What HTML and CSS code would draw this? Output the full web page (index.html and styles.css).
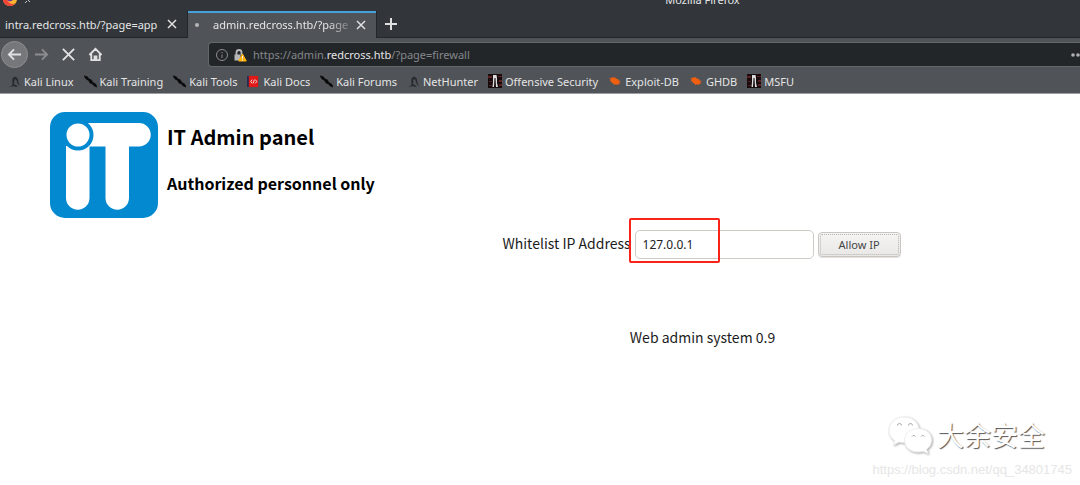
FILE: index.html
```
<!DOCTYPE html>
<html lang="en">
<head>
<meta charset="utf-8">
<title>IT Admin panel</title>
<link rel="stylesheet" href="styles.css">
</head>
<body>
<svg class="defs" aria-hidden="true">
  <symbol id="dragon" viewBox="0 0 14 14"><path d="M1 12.500c2-.2 3.200-.9 3.800-2.300L4.600 5.500C5 3 6.200 1.800 8 2c1.900.3 2.700 1.800 2.900 3.700.2 2.300.8 4 2.300 6-2-.7-3.300-2.300-3.700-4.400C9.200 5.500 9 4.600 8 4.600c-.9 0-1 1-1.200 2.300L6.500 10c1.200.6 2.600.8 4 2-1.500.9-3.300.5-4.600-.1-1.500.8-3.200 1.100-4.900.6z" fill="#292c2f"/></symbol>
  <symbol id="blade" viewBox="0 0 14 14"><path d="M0 1l3.500.8 1.800 2.500 2.500.8 1.700 3 3 1.600L14 13l-3-1.200-2-2.300-2.500-.8-1.700-3L2.500 4.500z" fill="#08090a" stroke="#08090a" stroke-width=".7"/></symbol>
  <symbol id="docs" viewBox="0 0 14 14"><path d="M1 1h11v12H1z" fill="#e01818"/><path d="M0 1h2v12H0z" fill="#252d52"/><path d="M5.500 5L4 7l1.500 2M9 5l1.500 2L9 9M8 5L6.500 9" fill="none" stroke="#fff" stroke-width=".9"/></symbol>
  <symbol id="offsec" viewBox="0 0 14 14"><path d="M0 0h14v14H0z" fill="#170b0d"/><path d="M0 2h4v2H0zm1 5h3v1H1zm9-5h4v1h-4zm1 4h3v2h-3zM1 11h3v1H1zm10-1h3v2h-3z" fill="#5b2020"/><path d="M5 1h3.500L9 4v5l1 4H8L7.500 4h-1L6 13H4.500L5 8z" fill="#ddd"/></symbol>
  <symbol id="bug" viewBox="0 0 14 14"><path d="M1 4l2 .4L4 3l1.500.7L7 3l.6 1.500L10 5l.5 1.500L13 7l-2 1 1.500 1.500L10.500 9.700 10 11l-2-.7L6 11l-.4-1.500L3.500 9l.3-1.200L1.500 7l1.300-1z" fill="#f06010"/></symbol>
</svg>

<header class="browser">
  <div class="titlebar">
    <svg class="firefox" viewBox="0 0 16 8" aria-hidden="true"><path d="M1 0c.5 3 3.300 6 7 6s6.500-3 7-6z" fill="#ffb52e"/><path d="M1 0c.5 3.500 3.300 6 7 6 2 0 4-.9 5.300-2.400C10 4.500 6.500 3.500 5.500 0z" fill="#f0463c"/><path d="M5.500 0h5c-.5 1.600-4 1.800-5 0z" fill="#6c31a8"/></svg>
    <svg class="pin" viewBox="0 0 8 4" aria-hidden="true"><path d="M1 3l2-2M4 0l2 2" stroke="#c8cbcd" fill="none"/></svg>
    <span class="window-title">Mozilla Firefox</span>
  </div>
  <nav class="tabs" aria-label="Tabs">
    <div class="tab">
      <span class="tab-name">intra.redcross.htb/?page=app</span>
      <button class="icon-button" aria-label="Close tab"><svg class="close" viewBox="0 0 10 10"><path d="M1 1l8 8M9 1L1 9"/></svg></button>
    </div>
    <div class="tab active">
      <span class="loading"></span>
      <span class="tab-name fade">admin.redcross.htb/?page</span>
      <button class="icon-button" aria-label="Close tab"><svg class="close" viewBox="0 0 10 10"><path d="M1 1l8 8M9 1L1 9"/></svg></button>
    </div>
    <button class="icon-button new-tab" aria-label="New tab"><svg class="plus" viewBox="0 0 12 12"><path d="M6 0v12M0 6h12"/></svg></button>
  </nav>
  <div class="toolbar">
    <button class="icon-button back" aria-label="Back"><svg class="nav-icon" viewBox="0 0 16 16"><path d="M15 8H2M7.500 2.500L2 8l5.500 5.500"/></svg></button>
    <button class="icon-button forward" aria-label="Forward"><svg class="nav-icon" viewBox="0 0 16 16"><path d="M1 8h13M8.500 2.500L14 8l-5.500 5.500"/></svg></button>
    <button class="icon-button" aria-label="Stop"><svg class="nav-icon" viewBox="0 0 16 16"><path d="M2 2l12 12M14 2L2 14"/></svg></button>
    <button class="icon-button" aria-label="Home"><svg class="nav-icon" viewBox="0 0 16 16"><path d="M1.500 8.500L8 2l6.500 6.500M3.500 7.500V14h9V7.500M7 14v-4h2v4"/></svg></button>
    <div class="address">
      <svg class="info" viewBox="0 0 14 14" aria-hidden="true"><circle cx="7" cy="7" r="5.500"/><path d="M7 6.500V10M7 4v1.300"/></svg>
      <svg class="lock" viewBox="0 0 14 14" aria-hidden="true"><path d="M3.500 7V4.500a2.500 2.500 0 0 1 5 0V7" fill="none" stroke="#b5b6b7" stroke-width="1.800"/><path d="M1.500 6.500h6v6h-6z" fill="#b5b6b7"/><path d="M9.500 6l3.800 7H5.700z" fill="#ffb20f" stroke="#ffb20f" stroke-linejoin="round"/><path d="M9.500 8v2.500M9.500 11.500v1" stroke="#fff"/></svg>
      <span class="url">https://admin.<b>redcross.htb</b>/?page=firewall</span>
      <svg class="more" viewBox="0 0 9 4" aria-hidden="true"><circle cx="2" cy="2" r="1.800"/><circle cx="7" cy="2" r="1.800"/></svg>
    </div>
  </div>
  <nav class="bookmarks" aria-label="Bookmarks">
    <a href="#"><svg><use href="#dragon"/></svg>Kali Linux</a>
    <a href="#"><svg><use href="#blade"/></svg>Kali Training</a>
    <a href="#"><svg><use href="#blade"/></svg>Kali Tools</a>
    <a href="#"><svg><use href="#docs"/></svg>Kali Docs</a>
    <a href="#"><svg><use href="#blade"/></svg>Kali Forums</a>
    <a href="#"><svg><use href="#dragon"/></svg>NetHunter</a>
    <a href="#"><svg class="wide"><use href="#offsec"/></svg>Offensive Security</a>
    <a href="#"><svg class="wide"><use href="#bug"/></svg>Exploit-DB</a>
    <a href="#"><svg class="wide"><use href="#bug"/></svg>GHDB</a>
    <a href="#"><svg class="wide"><use href="#offsec"/></svg>MSFU</a>
  </nav>
</header>

<main class="page">
  <section class="brand">
    <svg class="logo" viewBox="0 0 108 106" role="img" aria-label="IT">
      <rect width="108" height="106" rx="15" fill="#0389d0"/>
      <path d="M38 11h51a11.500 11.500 0 0 1 0 23.500H79V86a11.700 11.700 0 0 1-23.500 0V34.500H38z" fill="#fff"/>
      <path d="M16 34h23.500v52A11.700 11.700 0 0 1 16 86z" fill="#fff"/>
      <circle cx="28" cy="23" r="13.500" fill="#fff" stroke="#0389d0" stroke-width="4"/>
    </svg>
    <div>
      <h1>IT Admin panel</h1>
      <h2>Authorized personnel only</h2>
    </div>
  </section>
  <form class="whitelist">
    <label for="ip">Whitelist IP Address</label>
    <span class="field"><input id="ip" type="text" value="127.0.0.1"><span class="highlight"></span></span>
    <button class="allow" type="button"><span>Allow IP</span></button>
  </form>
  <footer class="version">Web admin system 0.9</footer>
</main>

<aside class="watermark">
  <div class="account">
    <svg class="wechat" viewBox="0 0 46 40" aria-hidden="true">
      <path d="M17 2C8 2 2 8 2 15.500c0 4.500 2.500 8 6 10.300L6.500 30l5.500-3c8 2 19-2 20-11.500C32 8 26 2 17 2z"/>
      <path d="M31 13.500c-8 0-13.500 5-13.500 11.700S23 37 31 37c2 0 3.500-.3 5-.8l5 2.300-1.500-4.200c3-2.200 5-5.300 5-9.100 0-6.700-5.500-11.700-13.500-11.700z"/>
      <path class="eyes" d="M10.500 10.500a2 2 0 0 1 4 0M21.500 10.500a2 2 0 0 1 4 0M25 21.500a2 2 0 0 1 3.500 0M34 21.500a2 2 0 0 1 3.500 0"/>
    </svg>
    <span lang="zh">大余安全</span>
  </div>
  <div class="blog">https://blog.csdn.net/qq_34801745</div>
</aside>
</body>
</html>
```
FILE: styles.css
```
* {
  box-sizing: border-box;
}

body {
  position: relative;
  min-height: 100vh;
  margin: 0;
  overflow-x: hidden;
  background: #fff;
  color: #1c1c1c;
  font-family: "Noto Sans CJK SC", sans-serif;
  font-size: 14px;
}

.defs {
  position: absolute;
  width: 0;
  height: 0;
}

.browser {
  background: #505357;
  border-bottom: 1px solid #9b9ea1;
  color: #e4e5e6;
  font-family: "Noto Sans", sans-serif;
  font-size: 11px;
}

.browser svg {
  display: block;
  flex: none;
}

.icon-button {
  display: flex;
  align-items: center;
  justify-content: center;
  padding: 0;
  border: 0;
  background: none;
  color: #dfe0e1;
}

.icon-button path {
  fill: none;
  stroke: currentColor;
}

.titlebar {
  display: flex;
  align-items: flex-end;
  height: 11px;
  padding: 0 0 5px 2px;
  overflow: hidden;
  background: #32363a;
}

.titlebar svg {
  align-self: flex-start;
}

.firefox {
  width: 16px;
  height: 8px;
}

.pin {
  width: 8px;
  height: 4px;
  margin-left: 6px;
}

.window-title {
  flex: 1;
  padding-left: 293px;
  line-height: 12px;
  text-align: center;
}

.tabs {
  display: flex;
  height: 27px;
  background: #32363a;
  border-bottom: 1px solid #24272a;
}

.tab {
  display: flex;
  align-items: center;
  width: 187px;
  padding: 0 10px 0 5px;
}

.tab.active {
  width: 190px;
  height: 27px;
  padding-left: 7px;
  background: #505357;
  border: solid #24272a;
  border-width: 0 1px;
  box-shadow: inset 0 2px #45a1dc;
}

.tab-name {
  flex: 1;
  white-space: nowrap;
}

.fade {
  margin-left: 14px;
  mask-image: linear-gradient(to right, #000 80%, transparent);
}

.loading {
  width: 4px;
  height: 4px;
  border-radius: 2px;
  background: #b4b6b8;
}

.close {
  width: 10px;
  height: 10px;
  stroke-width: 1.5;
}

.plus {
  width: 12px;
  height: 12px;
  stroke-width: 2;
}

.new-tab {
  width: 27px;
}

.toolbar {
  display: flex;
  align-items: center;
  height: 33px;
  padding-left: 1px;
}

.toolbar .icon-button {
  width: 27px;
  height: 27px;
}

.toolbar .back {
  border: 1px solid #8d8f92;
  border-radius: 50%;
  background: #75777a;
}

.toolbar .forward {
  color: #8b8e91;
}

.nav-icon {
  width: 15px;
  height: 15px;
  stroke-width: 2;
}

.address {
  display: flex;
  flex: 1;
  align-items: center;
  height: 25px;
  margin-left: 99px;
  padding-left: 6px;
  border: 1px solid #64676a;
  border-right: 0;
  border-radius: 4px 0 0 4px;
  background: #232629;
}

.info {
  width: 14px;
  height: 14px;
  fill: none;
  stroke: #8b8d8f;
}

.lock {
  width: 14px;
  height: 14px;
  margin-left: 4px;
}

.url {
  flex: 1;
  margin-left: 6px;
  color: #84878a;
}

.url b {
  color: #e4e5e6;
  font-weight: 400;
}

.more {
  width: 9px;
  height: 4px;
  fill: #aeb0b2;
}

.bookmarks {
  display: flex;
  align-items: center;
  gap: 10px;
  height: 22px;
  padding: 0 0 2px 8px;
  white-space: nowrap;
}

.bookmarks a {
  display: flex;
  align-items: center;
  gap: 3px;
  color: inherit;
  text-decoration: none;
}

.bookmarks svg {
  width: 13px;
  height: 13px;
}

.bookmarks .wide {
  width: 14px;
  height: 14px;
}

.page {
  padding-top: 18px;
}

.brand {
  display: flex;
  gap: 9px;
  padding-left: 50px;
  color: #000;
}

.logo {
  width: 108px;
  height: 106px;
}

h1,
h2 {
  margin: 0;
  font-weight: 700;
}

h1 {
  padding-top: 9px;
  font-size: 20px;
  line-height: 32px;
}

h2 {
  padding-top: 18px;
  font-size: 16px;
  line-height: 24px;
}

.whitelist {
  display: flex;
  align-items: center;
  justify-content: center;
  gap: 4px;
  padding: 12px 0 0 323px;
}

.whitelist label {
  padding-bottom: 4px;
}

.field {
  position: relative;
  display: flex;
}

.field input {
  width: 179px;
  height: 29px;
  padding: 0 7px;
  border: 1px solid #cfcbc6;
  border-radius: 5px;
  background: #fff;
  color: #222;
  font: 12px "Noto Sans", sans-serif;
}

.highlight {
  position: absolute;
  top: -12px;
  left: -6px;
  width: 91px;
  height: 45px;
  border: 2px solid #fa2318;
  border-radius: 2px;
  pointer-events: none;
}

.allow {
  width: 83px;
  height: 25px;
  padding: 1px;
  border: 1px solid #c9c5c1;
  border-radius: 4px;
  background: linear-gradient(#f4f4f3, #e9e8e7);
  box-shadow: 0 1px #e3e1df;
  color: #444;
  font: 11px "Noto Sans", sans-serif;
}

.allow span {
  display: block;
  border: 1px dotted #b5b3b1;
  border-radius: 2px;
  line-height: 19px;
}

.version {
  padding: 68px 0 0 325px;
  line-height: 20px;
  text-align: center;
}

.watermark {
  position: absolute;
  right: 8px;
  bottom: 5px;
  text-align: right;
}

.account {
  display: flex;
  align-items: center;
  justify-content: flex-end;
  gap: 4px;
  padding: 0 27px 4px 0;
  color: #fff;
  font-size: 27px;
  line-height: 42px;
  text-shadow: 1px 1px 1px #555;
}

.wechat {
  width: 46px;
  height: 40px;
  fill: #fff;
  stroke: #eee;
  filter: drop-shadow(1px 1px 1px #aaa);
}

.eyes {
  stroke: #aaa;
}

.blog {
  color: #e6e6e6;
  font: 13px/20px "Liberation Sans", sans-serif;
}
```
